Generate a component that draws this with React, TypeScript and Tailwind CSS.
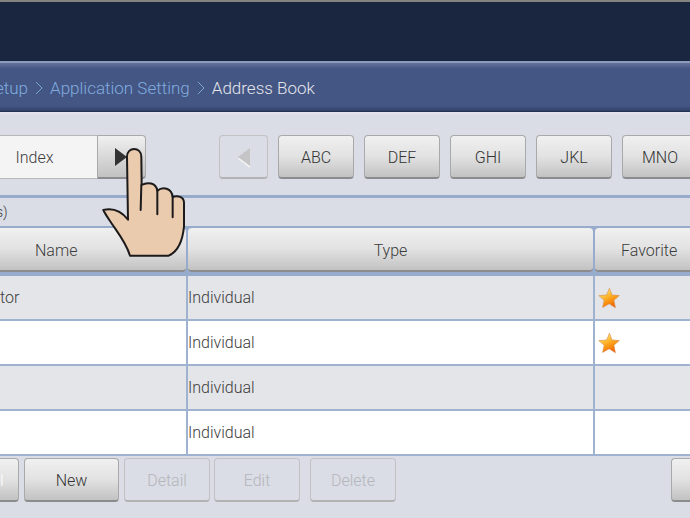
import React from 'react';

const raised =
  'rounded border border-[#a9a9ab] border-b-2 border-b-[#8c8c8e] bg-linear-to-b from-[#f0f0f0] via-[#e2e2e2] to-[#c2c2c2] pt-[2px] text-[#333]';
const flat =
  'rounded border border-[#c2c2c5] border-b-2 border-b-[#b2b2b5] bg-[#dadde5] pt-[2px] text-[#b4b5ba]';

const groups = ['ABC', 'DEF', 'GHI', 'JKL', 'MNO'];

const rows = [
  { name: 'tor', type: 'Individual', favorite: true },
  { name: '', type: 'Individual', favorite: true },
  { name: '', type: 'Individual', favorite: false },
  { name: '', type: 'Individual', favorite: false },
];

function Chevron() {
  return (
    <svg className="h-4 w-2 shrink-0" viewBox="0 0 8 16" fill="none" stroke="#7fa6d8" aria-hidden="true">
      <path d="M1 2 L7 8 L1 14" />
    </svg>
  );
}

function Star() {
  return (
    <svg className="ml-[3px] h-[22px] w-[22px]" viewBox="0 0 22 22" role="img" aria-label="Favorite">
      <defs>
        <linearGradient id="starFill" x1="0.2" y1="0" x2="0.7" y2="1">
          <stop offset="0" stopColor="#fff3a0" />
          <stop offset="0.35" stopColor="#fdc23a" />
          <stop offset="0.65" stopColor="#fb9410" />
          <stop offset="1" stopColor="#ea5a04" />
        </linearGradient>
      </defs>
      <path
        d="M11.5 1.2 L14 8 L21.3 8.6 L15.9 13.2 L17.4 20.8 L11.2 16.8 L4.6 20.4 L6.2 13.2 L0.8 8.6 L8.6 8 Z"
        fill="url(#starFill)"
        stroke="#d98a4a"
        strokeWidth="0.6"
        strokeLinejoin="round"
      />
    </svg>
  );
}

function Hand() {
  return (
    <svg
      className="pointer-events-none absolute top-[10px] left-[100px] z-10 h-[115px] w-[88px]"
      viewBox="300 75 264 345"
      stroke="#1d1a1b"
      strokeWidth="6"
      strokeLinecap="round"
      strokeLinejoin="round"
      fill="none"
      aria-hidden="true"
    >
      <path
        fill="#eacbae"
        d="M390 407 C378 366 350 334 328 300 C320 288 314 279 310 270 C340 263 366 276 384 299 L381 110 C381 79 424 79 424 110 L425 195 C442 185 468 188 472 212 C488 199 515 203 518 231 C532 225 552 230 552 248 L552 320 C548 360 536 394 506 407 Z"
      />
      <path d="M424 195 L422 270 M472 210 L472 283 M518 229 L518 292" />
    </svg>
  );
}

export default function App() {
  return (
    <div className="min-h-screen overflow-hidden bg-[#dadde5] font-['Roboto','Liberation_Sans',sans-serif] text-base font-light text-[#3c3c3c]">
      <header className="h-[61px] border-t-2 border-[#85837f] bg-[#1a253f]" />
      <nav
        aria-label="Breadcrumb"
        className="flex h-[51px] items-center gap-[7px] overflow-hidden border-t-2 border-b border-t-[#8d9abb] border-b-[#253250] bg-[linear-gradient(#63729a,#445684_6px,#445684_43px,#2f3f66)] pt-[2px] text-[17px] leading-5"
      >
        <a href="#setup" className="-ml-[5px] text-[#80acdf]">etup</a>
        <Chevron />
        <a href="#application" className="whitespace-nowrap text-[#80acdf]">Application Setting</a>
        <Chevron />
        <span className="whitespace-nowrap text-[#e4e6ec]" aria-current="page">Address Book</span>
      </nav>

      <div className="flex h-[86px] border-t-2 border-b-3 border-t-[#e4e2ea] border-b-[#97abcd] pt-[21px]">
        <div className="relative flex h-11 w-[146px] shrink-0">
          <button className="w-[97px] border-y border-[#b8b8ba] bg-[#f4f4f4] pt-[2px] pr-7">Index</button>
          <button
            aria-label="Next index"
            className="flex w-[49px] items-center rounded-r border border-b-2 border-[#a9a9ab] border-b-[#8c8c8e] bg-linear-to-b from-[#f0f0f0] to-[#c2c2c2] pl-[17px]"
          >
            <svg className="h-[18px] w-3" viewBox="0 0 12 18" fill="#333" aria-hidden="true">
              <path d="M0 0 L12 9 L0 18 Z" />
            </svg>
          </button>
          <Hand />
        </div>
        <div className="ml-[73px] flex h-11 gap-[10px]">
          <button disabled aria-label="Previous group" className={`flex w-[49px] items-center justify-center ${flat}`}>
            <svg className="h-5 w-3" viewBox="0 0 12 20" aria-hidden="true">
              <path d="M12 2 L0 11 L12 20 Z" fill="#f3f3f5" />
              <path d="M12 0 L0 9 L12 18 Z" fill="#c5c5c7" />
            </svg>
          </button>
          {groups.map((g) => (
            <button key={g} className={`w-[76px] shrink-0 ${raised}`}>{g}</button>
          ))}
        </div>
      </div>

      <div className="flex h-[30px] items-center border-b-2 border-[#97abcd] text-sm">
        <span className="-ml-1">s)</span>
      </div>

      <table className="w-full table-fixed border-separate border-spacing-0 text-left">
        <colgroup>
          <col className="w-[188px]" />
          <col />
          <col className="w-[95px]" />
        </colgroup>
        <thead>
          <tr className="h-12">
            {['Name', 'Type', 'Favorite'].map((h, i) => (
              <th
                key={h}
                scope="col"
                className={`border-b-4 border-[#97abcd] bg-[#97abcd] p-0 font-light ${i < 2 ? 'border-r-2' : ''}`}
              >
                <div
                  className={`flex h-11 items-center border-b-2 border-[#8c8c8e] bg-linear-to-b from-[#f0f0f0] via-[#e2e2e2] to-[#c2c2c2] pt-[3px] ${
                    i === 0 ? 'rounded-r-sm pl-[35px]' : i === 1 ? 'justify-center rounded-sm' : 'rounded-l-sm pl-[26px]'
                  }`}
                >
                  {h}
                </div>
              </th>
            ))}
          </tr>
        </thead>
        <tbody>
          {rows.map((r, i) => (
            <tr key={i} className={`h-[45px] ${i % 2 ? 'bg-white' : 'bg-[#e4e5e9]'}`}>
              <td className="border-r-2 border-b-2 border-[#9fb3d1] p-0">{r.name}</td>
              <td className="border-r-2 border-b-2 border-[#9fb3d1] p-0">{r.type}</td>
              <td className="border-b-2 border-[#9fb3d1] p-0">{r.favorite && <Star />}</td>
            </tr>
          ))}
        </tbody>
      </table>

      <footer className="flex pt-[2px]">
        <button className={`h-11 w-[19px] shrink-0 text-left ${raised} rounded-l-none border-l-0`}>
          <span className="text-white">l</span>
        </button>
        <button className={`ml-[5px] h-11 w-[95px] shrink-0 ${raised}`}>New</button>
        <button disabled className={`ml-[5px] h-11 w-[86px] shrink-0 ${flat}`}>Detail</button>
        <button disabled className={`ml-1 h-11 w-[86px] shrink-0 ${flat}`}>Edit</button>
        <button disabled className={`ml-[10px] h-11 w-[86px] shrink-0 ${flat}`}>Delete</button>
        <button aria-label="Close" className={`ml-auto h-11 w-[19px] shrink-0 ${raised} rounded-r-none border-r-0`} />
      </footer>
    </div>
  );
}
